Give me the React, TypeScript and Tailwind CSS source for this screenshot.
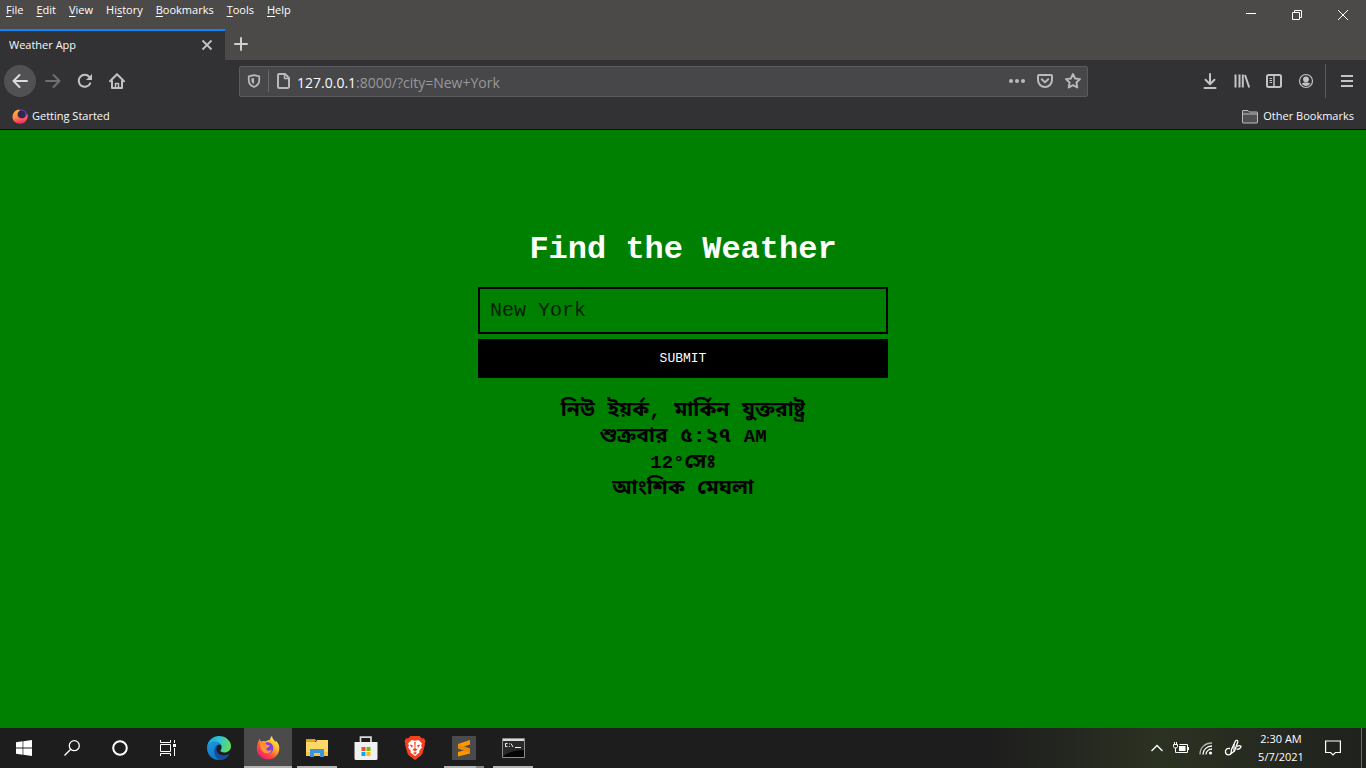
import { useState } from "react";
import type { ReactNode } from "react";

type IconProps = { children: ReactNode; className?: string; box?: string };

function Icon({ children, className = "size-4", box = "0 0 16 16" }: IconProps) {
  return (
    <svg
      viewBox={box}
      className={className}
      fill="none"
      stroke="currentColor"
      strokeWidth="2"
      strokeLinecap="round"
      strokeLinejoin="round"
      aria-hidden="true"
    >
      {children}
    </svg>
  );
}

const menus: [string, string, string][] = [
  ["", "F", "ile"],
  ["", "E", "dit"],
  ["", "V", "iew"],
  ["Hi", "s", "tory"],
  ["", "B", "ookmarks"],
  ["", "T", "ools"],
  ["", "H", "elp"],
];

function ToolButton({ label, children, dim }: { label: string; children: ReactNode; dim?: boolean }) {
  return (
    <button
      type="button"
      aria-label={label}
      className={
        dim
          ? "flex size-8 items-center justify-center text-[#6f6f71]"
          : "flex size-8 items-center justify-center text-[#c3c2c5]"
      }
    >
      {children}
    </button>
  );
}

function TitleBar() {
  return (
    <div className="flex h-[29px] justify-between bg-[#4c4a48] text-white">
      <nav aria-label="Menu bar" className="flex h-5 items-center gap-[13px] px-1.5 text-[11px]">
        {menus.map(([before, key, after]) => (
          <button key={key + after} type="button">
            {before}
            <span className="underline underline-offset-2">{key}</span>
            {after}
          </button>
        ))}
      </nav>
      <div className="flex">
        <button type="button" aria-label="Minimize" className="flex w-[46px] items-center justify-center">
          <svg viewBox="0 0 10 10" className="size-2.5" aria-hidden="true">
            <path d="M0 3.5h10" stroke="currentColor" />
          </svg>
        </button>
        <button type="button" aria-label="Restore" className="flex w-[46px] items-center justify-center">
          <svg viewBox="0 0 10 10" className="size-2.5" fill="none" stroke="currentColor" aria-hidden="true">
            <path d="M.5 2.5h7v7h-7zM2.5 2.5v-2h7v7h-2" />
          </svg>
        </button>
        <button type="button" aria-label="Close" className="flex w-[46px] items-center justify-center">
          <svg viewBox="0 0 10 10" className="size-2.5" fill="none" stroke="currentColor" aria-hidden="true">
            <path d="M0 0l10 10M10 0L0 10" />
          </svg>
        </button>
      </div>
    </div>
  );
}

function TabStrip() {
  return (
    <div className="flex h-[31px] bg-[#4c4a48] text-[#f9f9fa]">
      <div className="flex w-[225px] items-center justify-between border-t-2 border-[#0a84ff] bg-[#323234] pr-3 pb-0.5 pl-[9px] text-[11px]">
        <span className="pt-0.5">Weather App</span>
        <button type="button" aria-label="Close tab" className="text-[#c3c2c5]">
          <svg viewBox="0 0 12 12" className="size-3" fill="none" stroke="currentColor" strokeWidth="1.8" aria-hidden="true">
            <path d="M1.500 1.500l9 9M10.500 1.500l-9 9" />
          </svg>
        </button>
      </div>
      <button type="button" aria-label="New tab" className="flex w-8 items-center justify-center pb-0.5 text-[#d0cfce]">
        <Icon>
          <path d="M8 2v12M2 8h12" />
        </Icon>
      </button>
    </div>
  );
}

function Toolbar() {
  return (
    <div className="flex h-[42px] items-center bg-[#323234] px-1">
      <button
        type="button"
        aria-label="Back"
        className="mr-px flex size-8 items-center justify-center rounded-full bg-[#515153] text-[#dcdcdd]"
      >
        <Icon>
          <path d="M15 8H1.500M7.500 2l-6 6 6 6" />
        </Icon>
      </button>
      <ToolButton label="Forward" dim>
        <Icon>
          <path d="M1 8h13.500M8.500 2l6 6-6 6" />
        </Icon>
      </ToolButton>
      <ToolButton label="Reload">
        <Icon>
          <path d="M13.200 10.300A6 6 0 1 1 12.300 3.900" />
          <path d="M15 1v6H9z" fill="currentColor" stroke="none" />
        </Icon>
      </ToolButton>
      <ToolButton label="Home">
        <Icon>
          <path d="M1 8.200L8 1.300l7 6.900" />
          <path d="M3 8v7h10V8" />
          <path d="M6.500 15v-4.500h3V15" strokeWidth="1.500" />
        </Icon>
      </ToolButton>
      <div className="mr-[106px] ml-[106px] flex h-[31px] flex-1 items-center rounded-xs border border-[#5b5b5d] bg-[#474749] text-[#b9b9ba]">
        <button type="button" aria-label="Tracking protection" className="flex w-7 items-center justify-center">
          <Icon className="size-3.5">
            <path d="M8 1.200l6 1.600v4c0 4-2.200 6.500-6 8-3.800-1.500-6-4-6-8v-4z" />
            <path d="M8 4.500v7c-2-1-3-2.500-3-4.700V5.200z" fill="currentColor" stroke="none" />
          </Icon>
        </button>
        <span className="h-[22px] w-px bg-[#68686c]" />
        <button type="button" aria-label="Site information" className="flex w-7 items-center justify-center">
          <Icon>
            <path d="M4 1h6l4 4v8.500a1.500 1.500 0 0 1-1.500 1.500h-8A1.500 1.500 0 0 1 3 13.500V2a1 1 0 0 1 1-1z" />
            <path d="M9.500 1.500v4H14" strokeWidth="1.500" />
          </Icon>
        </button>
        <div className="relative h-full flex-1">
          <div aria-hidden="true" className="flex h-full items-center pt-0.5 text-[14px] text-[#98989b]">
            <span className="text-[#f9f9fa]">127.0.0.1</span>:8000/?city=New+York
          </div>
          <input
            aria-label="Address"
            defaultValue="127.0.0.1:8000/?city=New+York"
            className="absolute inset-0 bg-transparent text-[14px] text-transparent outline-none"
          />
        </div>
        <button type="button" aria-label="Page actions" className="flex w-7 items-center justify-center">
          <Icon>
            <g fill="currentColor" stroke="none">
              <circle cx="2" cy="8" r="2" />
              <circle cx="8" cy="8" r="2" />
              <circle cx="14" cy="8" r="2" />
            </g>
          </Icon>
        </button>
        <button type="button" aria-label="Save to Pocket" className="flex w-7 items-center justify-center">
          <Icon>
            <path d="M2 2h12a1 1 0 0 1 1 1v4a7 7 0 0 1-14 0V3a1 1 0 0 1 1-1z" />
            <path d="M4.800 6.300L8 9.400l3.200-3.100" />
          </Icon>
        </button>
        <button type="button" aria-label="Bookmark this page" className="flex w-7 items-center justify-center">
          <Icon>
            <path
              d="M8 1l2.100 4.500 4.900.600-3.600 3.400.9 5L8 12.100l-4.300 2.400.9-5L1 6.100l4.900-.600z"
              strokeWidth="1.900"
            />
          </Icon>
        </button>
      </div>
      <ToolButton label="Downloads">
        <Icon>
          <path d="M8 1v10M3.500 6.800L8 11.200l4.500-4.400M2.500 15h11" />
        </Icon>
      </ToolButton>
      <ToolButton label="Library">
        <Icon>
          <path d="M1.500 1.500v13M5.500 1.500v13M8.800 1.500v13M11 2l4.200 12.500" strokeWidth="2" strokeLinecap="butt" />
        </Icon>
      </ToolButton>
      <ToolButton label="Sidebars">
        <Icon>
          <rect x="1" y="2" width="14" height="12" rx="1.500" />
          <path d="M8 2.500V14" strokeWidth="1.500" strokeLinecap="butt" />
          <path d="M3.500 5.500H6M3.500 7.500H6M3.500 9.500H6" strokeWidth="1" strokeLinecap="butt" />
        </Icon>
      </ToolButton>
      <ToolButton label="Account">
        <Icon>
          <circle cx="8" cy="8" r="6.500" strokeWidth="1.200" />
          <circle cx="8" cy="6.300" r="2.900" fill="currentColor" stroke="none" />
          <path d="M3.700 10.600c1.500-1.500 7-1.500 8.600 0C10.500 13.800 5.500 13.800 3.700 10.600z" fill="currentColor" stroke="none" />
        </Icon>
      </ToolButton>
      <span className="mx-[3px] h-[34px] w-px bg-[#5b5b5d]" />
      <span className="-mr-px ml-0.5">
        <ToolButton label="Open menu">
          <Icon>
            <path d="M2 3h12M2 8h12M2 13h12" strokeLinecap="butt" />
          </Icon>
        </ToolButton>
      </span>
    </div>
  );
}

function BookmarksBar() {
  return (
    <div className="flex h-7 items-center justify-between border-b border-[#0c0c0d] bg-[#323234] px-3 pt-0.5 text-[11px] text-[#f9f9fa]">
      <a href="#start" className="flex items-center gap-1">
        <svg viewBox="0 0 16 16" className="size-4" aria-hidden="true">
          <defs>
            <linearGradient id="bm" x1="0.3" y1="0" x2="0.5" y2="1">
              <stop offset="0" stopColor="#ffb53a" />
              <stop offset="0.5" stopColor="#ff8a48" />
              <stop offset="1" stopColor="#f5206c" />
            </linearGradient>
          </defs>
          <circle cx="8.500" cy="7" r="6.800" fill="#6a3bbd" />
          <circle cx="9.300" cy="5.500" r="4" fill="#33264f" />
          <path d="M5 1C1.500 2.500-.8 7 1.200 11c2.300 4.600 9.300 5 12.500 1.200 1.900-2.200 2.300-5 1.500-7.700-.6 2.800-2.200 5.200-5.200 5C6.500 9.200 4.800 6.500 5.800 4 6.300 2.800 7 2 8 1.300 7 .7 6 .6 5 1z" fill="url(#bm)" />
        </svg>
        Getting Started
      </a>
      <button type="button" className="flex items-center gap-[5px]">
        <svg viewBox="0 0 16 16" className="size-4" fill="#505052" stroke="#bdbdbf" aria-hidden="true">
          <path d="M.5 3V2a.5.5 0 0 1 .5-.5h5L7.500 3H15a.5.5 0 0 1 .5.500v10a.5.5 0 0 1-.5.500H1a.5.5 0 0 1-.5-.500zM.5 5h15" />
        </svg>
        Other Bookmarks
      </button>
    </div>
  );
}

function Weather() {
  const [city, setCity] = useState("");
  return (
    <main className="flex flex-1 flex-col items-center bg-[#008000] px-4 pt-[102px] font-['Liberation_Mono','Noto_Sans_Bengali',monospace]">
      <h1 className="text-[32px] leading-9 font-bold text-white">Find the Weather</h1>
      <form className="mt-[19px] flex w-full max-w-[410px] flex-col gap-[5px]" onSubmit={(e) => e.preventDefault()}>
        <input
          aria-label="City"
          placeholder="New York"
          value={city}
          onChange={(e) => setCity(e.target.value)}
          className="h-[47px] border-2 border-black bg-transparent px-2.5 text-[20px] text-black outline-none placeholder:text-[#002200]"
        />
        <button type="submit" className="h-[39px] bg-black text-[13px] text-white">
          SUBMIT
        </button>
      </form>
      <h3 className="mt-5 text-center text-[21px] leading-[26px] font-bold text-black">
        <div>নিউ ইয়র্ক, মার্কিন যুক্তরাষ্ট্র</div>
        <div>
          শুক্রবার ৫:২৭ <span className="text-[19px]">AM</span>
        </div>
        <div>
          <span className="text-[19px]">12°</span>সেঃ
        </div>
        <div>আংশিক মেঘলা</div>
      </h3>
    </main>
  );
}

function TaskButton({ label, children, state }: { label: string; children: ReactNode; state?: "active" | "open" | "stack" }) {
  return (
    <button
      type="button"
      aria-label={label}
      className={
        state === "active"
          ? "flex h-10 w-12 flex-col items-center bg-[#4b4b4b] text-white"
          : "flex h-10 w-12 flex-col items-center text-white"
      }
    >
      <span className="flex flex-1 items-center pt-0.5">{children}</span>
      <span
        className={
          state === "active"
            ? "h-0.5 w-full bg-[#b4b4b4]"
            : state === "open"
              ? "h-0.5 w-10 bg-[#b4b4b4]"
              : state === "stack"
                ? "h-0.5 w-10 border-r-8 border-[#858585] bg-[#b4b4b4]"
                : "h-0.5 w-10"
        }
      />
    </button>
  );
}

function Taskbar() {
  return (
    <footer className="flex h-10 justify-between bg-linear-to-r from-[#1d1d1d] from-72% via-[#2c3222] via-85% to-[#1f211d] text-white">
      <div className="flex">
        <TaskButton label="Start">
          <svg viewBox="0 0 16 16" className="size-4" fill="currentColor" aria-hidden="true">
            <path d="M0 2.200l6.600-.9v6.300H0zM7.300 1.200L16 0v7.600H7.300zM0 8.400h6.600v6.300L0 13.800zM7.300 8.400H16V16l-8.700-1.200z" />
          </svg>
        </TaskButton>
        <TaskButton label="Search">
          <svg viewBox="0 0 16 16" className="size-4" fill="none" stroke="currentColor" strokeWidth="1.300" aria-hidden="true">
            <circle cx="10.300" cy="5.700" r="5" />
            <path d="M6.700 9.300L.5 15.500" />
          </svg>
        </TaskButton>
        <TaskButton label="Cortana">
          <svg viewBox="0 0 16 16" className="size-4" fill="none" stroke="currentColor" strokeWidth="2" aria-hidden="true">
            <circle cx="8" cy="8" r="6.800" />
          </svg>
        </TaskButton>
        <TaskButton label="Task view">
          <svg viewBox="0 0 16 16" className="size-4" fill="none" stroke="currentColor" aria-hidden="true">
            <path d="M.5 0v2.500h10V0M.5 4.500h10v7H.500zM.5 16v-2.500h10V16M14.500 0v3M14.500 8v8" />
            <path d="M13 4h3v3h-3z" fill="currentColor" stroke="none" />
          </svg>
        </TaskButton>
        <div className="ml-[3px] flex gap-px">
          <TaskButton label="Microsoft Edge">
            <svg viewBox="0 0 24 24" className="size-6" aria-hidden="true">
              <defs>
                <linearGradient id="edgeTop" x1="0" y1="0.300" x2="1" y2="0.500">
                  <stop offset="0" stopColor="#1fa2dd" />
                  <stop offset="0.500" stopColor="#2fc6d3" />
                  <stop offset="1" stopColor="#66dd56" />
                </linearGradient>
                <linearGradient id="edgeLow" x1="0" y1="0" x2="0.500" y2="1">
                  <stop offset="0" stopColor="#1c97dc" />
                  <stop offset="1" stopColor="#1173c8" />
                </linearGradient>
              </defs>
              <path d="M0 11C1 4 6 0 12 0c7 0 12 5 12 10 0 4-3 6.500-6.500 6.500-3 0-4.500-1.200-4-2 1.800-2.200 1.500-5-.5-6.500C9 5 2.500 6 0 11z" fill="url(#edgeTop)" />
              <path d="M0 12c.5-4 4-6.500 8-6.500 3 0 5.500 1.500 6.300 3.500C11 7.500 8.500 10 8.500 13.500c0 5 6 8.500 12 5.500C18 22.500 15 24 12 24 5 24 0 18.500 0 12z" fill="url(#edgeLow)" />
              <path d="M9.500 9.500c-4 4.500-2.500 12 3.500 14.500 4 .2 7.300-2 9.300-5.300.3-.5 0-.8-.5-.500-5.500 2.500-12.300.3-12.300-5 0-1.500.5-3 1.500-4z" fill="#124f9f" />
            </svg>
          </TaskButton>
          <TaskButton label="Firefox" state="active">
            <svg viewBox="0 0 24 24" className="size-6" aria-hidden="true">
              <defs>
                <linearGradient id="fox" x1="0.850" y1="0.100" x2="0.200" y2="0.950">
                  <stop offset="0" stopColor="#fff04a" />
                  <stop offset="0.350" stopColor="#ffae2c" />
                  <stop offset="0.650" stopColor="#ff5339" />
                  <stop offset="1" stopColor="#f0157a" />
                </linearGradient>
              </defs>
              <path d="M1.500 8C2 5.500 3 4 4 3c0 1.500.5 2 1.200 2.500C6.500 5 8 5 9 5.300 11 5 12 4 14 3.800c0-1.500.8-2.900 2-3.800.2 2.800 2 4 3.500 6 .4-.5.400-1 .300-1.600C23 7.500 24 11 23 15c-1.300 5-6 8.500-11 8.500S2.500 20 1.200 15.500C.6 13 .7 10.500 1.500 8z" fill="url(#fox)" />
              <path d="M10 6.500c3-.8 6 .6 7 3.500 1.200 4-1.500 7.500-5 7.500S6.500 15 6.800 12z" fill="#7a42e4" />
              <path d="M4 6.500c3-.5 5 .8 6.500 2 1.200.7 2.500.600 3.200 1-.5 1.500-2 2-3.200 2.700-.8 1 0 2.300 2 2.500 1.500.1 2.500-.6 3.300-1.400-.3 2.700-2.300 4.200-4.500 4.200C7 17.500 4 13.500 4 6.500z" fill="#ff9436" />
            </svg>
          </TaskButton>
          <TaskButton label="File Explorer" state="open">
            <svg viewBox="0 0 22 20" className="h-5 w-[22px]" aria-hidden="true">
              <path d="M0 1h9l1.500 2H0z" fill="#d99d10" />
              <path d="M0 4h10l1-2h11v16H0z" fill="#ffd766" />
              <path d="M0 2h10l-1 2H0z" fill="#e0a51a" />
              <path d="M0 14h22v4H0z" fill="#f7c544" />
              <path d="M4 11h14v8h-4v-4H8v4H4z" fill="#3d94d9" />
            </svg>
          </TaskButton>
          <TaskButton label="Microsoft Store">
            <svg viewBox="0 0 24 24" className="size-6" aria-hidden="true">
              <path d="M6.500 7V1.200h10.500V7" fill="none" stroke="#dadada" strokeWidth="1.700" />
              <path d="M.5 6h23v16.500a1.500 1.500 0 0 1-1.500 1.500H2a1.500 1.500 0 0 1-1.500-1.500z" fill="#f1f1f1" />
              <path d="M7.500 11h4v4h-4z" fill="#f1511b" />
              <path d="M12.500 11h4v4h-4z" fill="#80b900" />
              <path d="M7.500 16h4v4h-4z" fill="#00adef" />
              <path d="M12.500 16h4v4h-4z" fill="#fbbc09" />
            </svg>
          </TaskButton>
          <TaskButton label="Brave">
            <svg viewBox="0 0 22 24" className="h-6 w-[22px]" aria-hidden="true">
              <path d="M6.500 0h9l2.500 2.500 2-.3 1.500 3-.8 2 .3 1-2.500 9.300L17 19.500 11 24l-6-4.500-1.500-2L1 8.200l.3-1-.8-2 1.500-3 2 .3z" fill="#f8401c" />
              <path d="M7.500 4L11 4.700 14.500 4 18 7.500l-1 2.300 1 1.500-2.800 3.700.3 1.500L11 20l-4.500-3.500.3-1.500L4 11.300l1-1.500-1-2.300z" fill="#fff" />
              <path d="M5.500 8.500l3.500.7-1 2.500zM16.500 8.500l-3.500.7 1 2.500zM10.300 6h1.400l-.3 6.500h-.8zM8.500 13.500L11 12l2.500 1.500L11 15.500zM9 17l2-1 2 1-2 1.500z" fill="#f8401c" />
            </svg>
          </TaskButton>
          <TaskButton label="Sublime Text" state="stack">
            <svg viewBox="0 0 24 24" className="size-6" aria-hidden="true">
              <rect width="24" height="24" rx="1" fill="#4b4b4b" />
              <path d="M6 8l12-4v4.500l-7 2.200 7 2.300v4.500L6 20.500V16l7-1.700-7-2.300z" fill="#ff9800" />
              <path d="M6 8l12 4.500v4.500L6 12.500z" fill="#f08a00" />
            </svg>
          </TaskButton>
          <TaskButton label="Command Prompt" state="open">
            <svg viewBox="0 0 23 20" className="h-5 w-[23px]" aria-hidden="true">
              <path d="M.5.500h22v19H.500z" fill="#050505" stroke="#8c8c8c" />
              <path d="M1 1h21v2H1z" fill="#d4dde2" />
              <path d="M1 3h21v9C14 12 7 14 1 18z" fill="#2a2a2a" />
              <path d="M5.500 5.500h-2v3h2M7.500 5.500v.8M7.500 8v.8M9 5.500l2 3.500M13 9.500h6" fill="none" stroke="#f3f3f3" />
            </svg>
          </TaskButton>
        </div>
      </div>
      <div className="flex items-center">
        <button type="button" aria-label="Show hidden icons" className="flex w-6 justify-center">
          <svg viewBox="0 0 12 12" className="size-3" fill="none" stroke="currentColor" strokeWidth="1.300" aria-hidden="true">
            <path d="M.5 9L6 3.500 11.500 9" />
          </svg>
        </button>
        <button type="button" aria-label="Battery" className="flex w-6 justify-center">
          <svg viewBox="0 0 16 12" className="h-3 w-4" fill="none" stroke="currentColor" aria-hidden="true">
            <path d="M6.500 2.500h8v8h-10M15.500 5v3M1.500 0v2M3.500 0v2M.5 2.500h4v2L3.500 6h-2L.5 4.500zM2.500 6v4.500h2" />
            <path d="M6 4h6.500v5H6z" fill="currentColor" stroke="none" />
          </svg>
        </button>
        <button type="button" aria-label="Network" className="flex w-[26px] justify-center">
          <svg viewBox="0 0 14 14" className="size-3.5" fill="none" stroke="currentColor" strokeWidth="1.300" aria-hidden="true">
            <path d="M1 13.500C1 6.500 6 2 13 2" stroke="#b5b6b2" />
            <path d="M4 13.500c0-5 4-8.500 9-8.500M7 13.500c0-3 2.500-5.500 6-5.500" />
            <circle cx="11.500" cy="12" r="1.600" fill="currentColor" stroke="none" />
          </svg>
        </button>
        <button type="button" aria-label="Pen workspace" className="flex w-7 justify-center">
          <svg viewBox="0 0 18 18" className="size-[18px]" fill="none" stroke="currentColor" strokeWidth="1.300" aria-hidden="true">
            <path d="M7 14.500l.5-4L11.500 2c.7-1.300 2.800-.5 2.300 1L10.500 12z" />
            <path d="M6 9.500C3 8.800 1 11 1.500 13.500c.6 2.800 4.500 3.200 6 .5M13 7.500c1.500-1.200 3.300-.8 4-.2-.3 2-2 3.200-4.500 2.700M10 5v7" />
          </svg>
        </button>
        <div className="w-[68px] text-center text-[11px] leading-[18px]">
          <div>2:30 AM</div>
          <div>5/7/2021</div>
        </div>
        <button type="button" aria-label="Notifications" className="flex w-9 justify-center">
          <svg viewBox="0 0 16 16" className="size-4" fill="none" stroke="currentColor" strokeWidth="1.200" aria-hidden="true">
            <path d="M.6 1h14.800v11.500h-5L8 15l-2.400-2.500h-5z" />
          </svg>
        </button>
        <button type="button" aria-label="Show desktop" className="ml-2.5 h-10 w-[5px] border-l border-[#6a6c66]" />
      </div>
    </footer>
  );
}

export default function App() {
  return (
    <div className="flex min-h-screen flex-col font-['Open_Sans','Noto_Sans',sans-serif]">
      <header>
        <TitleBar />
        <TabStrip />
        <Toolbar />
        <BookmarksBar />
      </header>
      <Weather />
      <Taskbar />
    </div>
  );
}
